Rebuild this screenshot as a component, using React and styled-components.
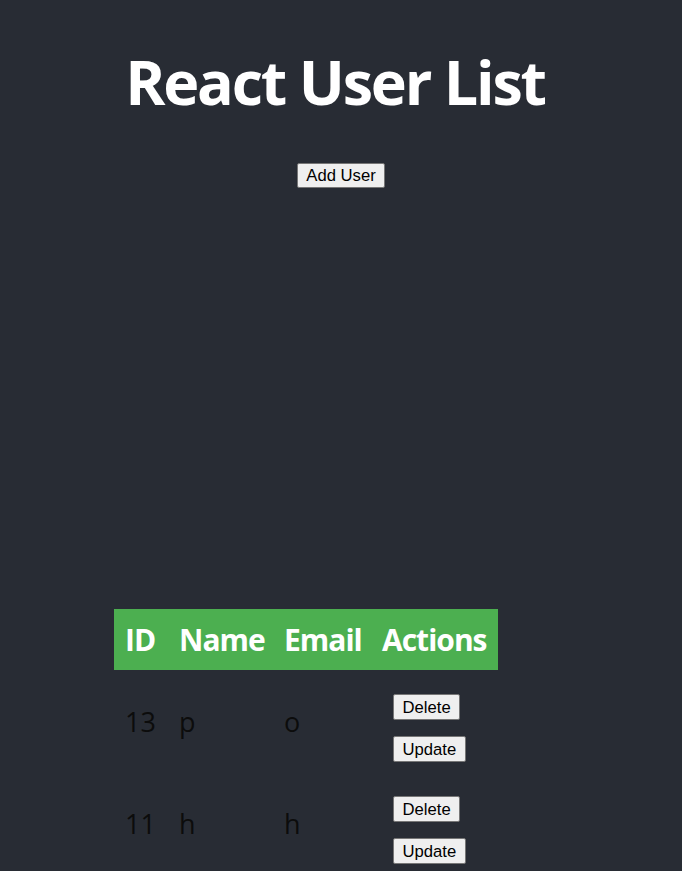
import React from 'react';
import styled, { createGlobalStyle } from 'styled-components';

const GlobalStyle = createGlobalStyle`
    html, body {
        margin: 0;
        padding: 0;
        background: #282c34;
    }
`;

const Page = styled.div`
    min-height: 871px;
    background: #282c34;
    font-family: "Open Sans", "Noto Sans", sans-serif;
    display: flex;
    flex-direction: column;
    align-items: center;
    overflow: hidden;
`;

const Title = styled.h1`
    margin: 40px 12px 0 0;
    font-size: 61px;
    line-height: 84px;
    font-weight: 700;
    color: #fff;
    letter-spacing: -2.2px;
`;

const NativeButton = styled.button`
    font-family: "Liberation Sans", Arial, sans-serif;
    font-size: 16.67px;
    line-height: 19px;
    color: #000;
    background: #efefef;
    border: 1px solid #767676;
    border-radius: 2px;
    padding: ${(p) => (p.$tall ? '2.5px' : '2px')} 8.5px;
    cursor: pointer;
    &:hover {
        background: #e5e5e5;
    }
`;

const AddRow = styled.div`
    margin-top: 39px;
    margin-bottom: 421px;
`;

const TableWrap = styled.div`
    align-self: flex-start;
    margin-left: 114px;
`;

const Table = styled.table`
    width: 384px;
    border-collapse: collapse;
    border-spacing: 0;
    table-layout: fixed;
`;

const HeadCell = styled.th`
    width: ${(p) => p.$w}px;
    background: #4caf50;
    color: #fff;
    font-size: 30px;
    font-weight: 700;
    letter-spacing: -1px;
    text-align: left;
    padding: 0 11px;
    height: 61px;
    white-space: nowrap;
    box-sizing: border-box;
`;

const Cell = styled.td`
    color: #0c0c0c;
    font-size: 27px;
    padding: 0 11px;
    height: 102px;
    vertical-align: middle;
    white-space: nowrap;
`;

const ActionCell = styled.td`
    padding: 24px 11px 10px 22px;
    vertical-align: top;
`;

const Actions = styled.div`
    display: flex;
    flex-direction: column;
    align-items: flex-start;
    gap: 16px;
`;

const users = [
    { id: 13, name: 'p', email: 'o' },
    { id: 11, name: 'h', email: 'h' },
];

export default function App() {
    return (
        <Page>
            <GlobalStyle />
            <Title>React User List</Title>
            <AddRow>
                <NativeButton>Add User</NativeButton>
            </AddRow>
            <TableWrap>
                <Table>
                    <thead>
                        <tr>
                            <HeadCell $w={54}>ID</HeadCell>
                            <HeadCell $w={105}>Name</HeadCell>
                            <HeadCell $w={98}>Email</HeadCell>
                            <HeadCell $w={127}>Actions</HeadCell>
                        </tr>
                    </thead>
                    <tbody>
                        {users.map((u) => (
                            <tr key={u.id}>
                                <Cell>{u.id}</Cell>
                                <Cell>{u.name}</Cell>
                                <Cell>{u.email}</Cell>
                                <ActionCell>
                                    <Actions>
                                        <NativeButton $tall>Delete</NativeButton>
                                        <NativeButton $tall>Update</NativeButton>
                                    </Actions>
                                </ActionCell>
                            </tr>
                        ))}
                    </tbody>
                </Table>
            </TableWrap>
        </Page>
    );
}
